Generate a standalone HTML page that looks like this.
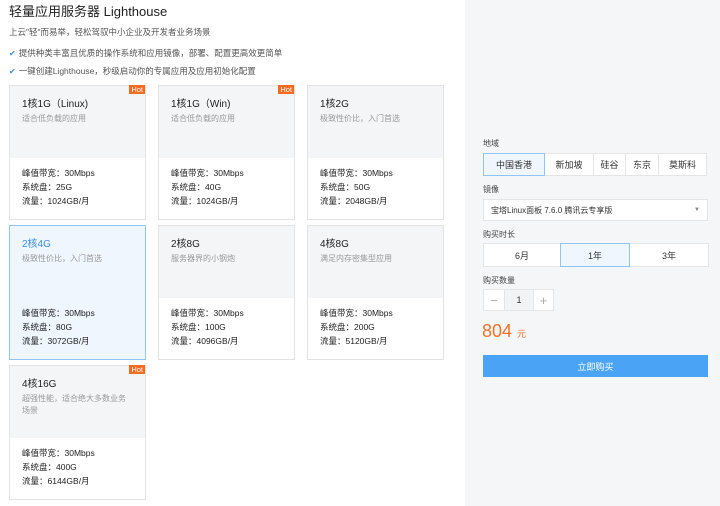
<!DOCTYPE html><html><head><meta charset="utf-8"><style>
*{margin:0;padding:0;box-sizing:border-box}
body{width:720px;height:506px;overflow:hidden;background:#fff;font-family:"Liberation Sans","Noto Sans CJK SC",sans-serif;color:#333;position:relative}
.a{position:absolute}
.h1{left:9px;top:1px;font-size:13px;color:#222}
.p{font-size:8.5px;color:#555;left:9px}
.ck{color:#3a8ee6;font-size:8px;margin-right:3px}
.card{position:absolute;width:137px;height:135px;border:1px solid #e3e3e3;background:#fff}
.card .top{height:72px;background:#f4f5f7;padding:9px 12px}
.card.sel{border-color:#8fc4f5;background:#eff6fd}
.card.sel .top{background:transparent}
.t{font-size:10px;color:#222}
.s{font-size:8px;color:#999;margin-top:3px;line-height:12px}
.sp{padding:8px 12px;font-size:8.5px;line-height:14px;color:#222}
.hot{position:absolute;right:0;top:-1px;background:#f56b20;color:#fff;font-size:7.5px;padding:0 2px;line-height:9px}
.right{left:465px;top:0;width:255px;height:506px;background:#f5f6f7}
.lb{font-size:8px;color:#444;left:483px}
.row{position:absolute;left:483px;display:flex}
.b{background:#fff;border:1px solid #e5e5e5;font-size:9px;color:#333;display:flex;align-items:center;justify-content:center;margin-right:-1px}
.b.on{border-color:#8fc4f5;background:#eff6fd;position:relative;z-index:1}
</style></head><body>
<div class="right a"></div>
<div class="a h1">轻量应用服务器 Lighthouse</div>
<div class="a p" style="top:26px">上云"轻"而易举，轻松驾驭中小企业及开发者业务场景</div>
<div class="a p" style="top:47px"><span class="ck">✔</span>提供种类丰富且优质的操作系统和应用镜像，部署、配置更高效更简单</div>
<div class="a p" style="top:65px"><span class="ck">✔</span>一键创建Lighthouse，秒级启动你的专属应用及应用初始化配置</div>

<div class="card" style="left:9px;top:85px"><div class="hot">Hot</div><div class="top"><div class="t">1核1G（Linux)</div><div class="s">适合低负载的应用</div></div><div class="sp">峰值带宽：30Mbps<br>系统盘：25G<br>流量：1024GB/月</div></div>
<div class="card" style="left:158px;top:85px"><div class="hot">Hot</div><div class="top"><div class="t">1核1G（Win)</div><div class="s">适合低负载的应用</div></div><div class="sp">峰值带宽：30Mbps<br>系统盘：40G<br>流量：1024GB/月</div></div>
<div class="card" style="left:307px;top:85px"><div class="top"><div class="t">1核2G</div><div class="s">极致性价比，入门首选</div></div><div class="sp">峰值带宽：30Mbps<br>系统盘：50G<br>流量：2048GB/月</div></div>
<div class="card sel" style="left:9px;top:225px"><div class="top"><div class="t" style="color:#3a8ee6">2核4G</div><div class="s">极致性价比，入门首选</div></div><div class="sp">峰值带宽：30Mbps<br>系统盘：80G<br>流量：3072GB/月</div></div>
<div class="card" style="left:158px;top:225px"><div class="top"><div class="t">2核8G</div><div class="s">服务器界的小钢炮</div></div><div class="sp">峰值带宽：30Mbps<br>系统盘：100G<br>流量：4096GB/月</div></div>
<div class="card" style="left:307px;top:225px"><div class="top"><div class="t">4核8G</div><div class="s">满足内存密集型应用</div></div><div class="sp">峰值带宽：30Mbps<br>系统盘：200G<br>流量：5120GB/月</div></div>
<div class="card" style="left:9px;top:365px"><div class="hot">Hot</div><div class="top"><div class="t">4核16G</div><div class="s">超强性能，适合绝大多数业务场景</div></div><div class="sp">峰值带宽：30Mbps<br>系统盘：400G<br>流量：6144GB/月</div></div>

<div class="a lb" style="top:138px">地域</div>
<div class="row" style="top:153px;height:23px"><div class="b on" style="width:62px">中国香港</div><div class="b" style="width:50px">新加坡</div><div class="b" style="width:33px">硅谷</div><div class="b" style="width:34px">东京</div><div class="b" style="width:49px">莫斯科</div></div>
<div class="a lb" style="top:184px">镜像</div>
<div class="a b" style="left:483px;top:199px;width:225px;height:22px;justify-content:space-between;padding:0 7px;font-size:8px">宝塔Linux面板 7.6.0 腾讯云专享版<span style="font-size:6px;color:#888">▼</span></div>
<div class="a lb" style="top:229px">购买时长</div>
<div class="row" style="top:243px;height:24px"><div class="b" style="width:78px">6月</div><div class="b on" style="width:70px">1年</div><div class="b" style="width:80px">3年</div></div>
<div class="a lb" style="top:275px">购买数量</div>
<div class="row" style="top:289px;height:22px"><div class="b" style="width:22px;color:#aaa;font-size:13px">−</div><div class="b" style="width:30px;background:#f2f3f5">1</div><div class="b" style="width:21px;color:#aaa;font-size:13px">+</div></div>
<div class="a" style="left:482px;top:321px;color:#f0712a;font-size:18px">804 <span style="font-size:9px">元</span></div>
<div class="a" style="left:483px;top:355px;width:225px;height:22px;background:#4aa3f5;color:#fff;font-size:9px;display:flex;align-items:center;justify-content:center">立即购买</div>
</body></html>
